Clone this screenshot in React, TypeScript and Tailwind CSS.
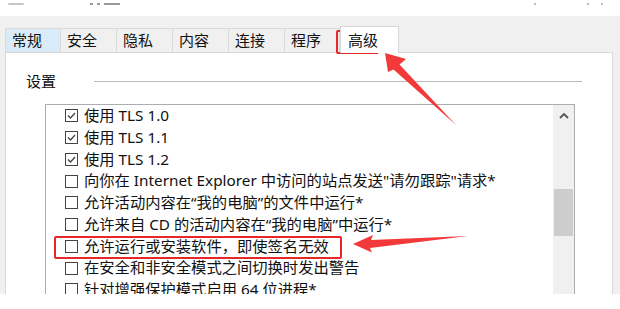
import React from 'react';

interface Option {
  label: string;
  checked: boolean;
}

const tabs = ['常规', '安全', '隐私', '内容', '连接', '程序'];

const options: Option[] = [
  { label: '使用 TLS 1.0', checked: true },
  { label: '使用 TLS 1.1', checked: true },
  { label: '使用 TLS 1.2', checked: true },
  { label: '向你在 Internet Explorer 中访问的站点发送"请勿跟踪"请求*', checked: false },
  { label: '允许活动内容在“我的电脑”的文件中运行*', checked: false },
  { label: '允许来自 CD 的活动内容在“我的电脑”中运行*', checked: false },
  { label: '允许运行或安装软件，即使签名无效', checked: false },
  { label: '在安全和非安全模式之间切换时发出警告', checked: false },
  { label: '针对增强保护模式启用 64 位进程*', checked: false },
];

function CheckBox({ checked }: { checked: boolean }) {
  return (
    <div className="w-[13px] h-[13px] shrink-0 border border-[#444] bg-white flex items-center justify-center">
      {checked && (
        <svg width="11" height="11" viewBox="0 0 11 11">
          <path d="M2 5.5 L4.5 8 L9 3" fill="none" stroke="#444" strokeWidth="1.3" />
        </svg>
      )}
    </div>
  );
}

function Arrows() {
  return (
    <svg className="absolute left-0 top-0 pointer-events-none" width="620" height="309" viewBox="0 0 620 309">
      {/* arrow to the 高级 tab */}
      <polygon
        points="385,53 406,59 399.5,64.5 456,125 393.5,69.5 388,72"
        fill="#f23a3a"
      />
      {/* arrow to the highlighted option */}
      <polygon
        points="353,244 373,235 371,240 468,236 370,248 372,252.5"
        fill="#f23a3a"
      />
    </svg>
  );
}

export default function App() {
  return (
    <div className="relative w-[620px] h-[309px] bg-white overflow-hidden font-['Noto_Sans','Noto_Sans_CJK_SC',sans-serif] text-[15px] text-[#111]">
      {/* leftover title bar */}
      <div className="h-[16px] flex items-start pt-[3px]">
        <div className="ml-[8px] w-[16px] h-[2px] rounded bg-[#c8c8c8]" />
        <div className="ml-[66px] w-[3px] h-[2px] bg-[#999]" />
        <div className="ml-[4px] w-[3px] h-[2px] bg-[#999]" />
        <div className="ml-[4px] w-[16px] h-[2px] bg-[#999]" />
        <div className="ml-[414px] w-[2px] h-[2px] bg-[#bbb]" />
        <div className="ml-[51px] w-[2px] h-[2px] bg-[#bbb]" />
        <div className="ml-[12px] w-[2px] h-[2px] bg-[#bbb]" />
      </div>

      <div className="h-[278px] bg-[#f0f0f0] pt-[10px] pl-[5px]">
        {/* tab strip */}
        <div className="flex items-end h-[26px]">
          {tabs.map((t, i) => (
            <div
              key={t}
              className={
                i === 0
                  ? 'h-[24px] w-[56px] pl-[6px] flex items-center leading-none bg-[#d9eaf8] border border-b-0 border-[#dadada]'
                  : i === tabs.length - 1
                  ? 'h-[24px] w-[55px] pl-[6px] flex items-center leading-none border-t border-r border-[#dadada]'
                  : 'h-[24px] w-[56px] pl-[6px] flex items-center leading-none border-t border-r border-[#dadada]'
              }
            >
              {t}
            </div>
          ))}
          <div className="relative z-10 -mb-px h-[27px] w-[59px] pl-[7px] flex items-center leading-none bg-white border border-b-0 border-[#d9d9d9]">
            高级
          </div>
        </div>

        {/* tab page */}
        <div className="w-[608px] h-[242px] bg-white border border-b-0 border-[#d9d9d9] overflow-hidden">
          <div className="mt-[19px] h-[18px] flex items-center">
            <span className="ml-[20px] leading-none">设置</span>
            <div className="ml-[38px] w-[488px] border-t border-[#b9b9b9]" />
          </div>

          <div className="mt-[14px] ml-[39px] w-[530px] h-[220px] border border-b-0 border-[#abadb3] flex">
            <div className="flex-1 text-[15.3px]">
              {options.map((o) => (
                <div key={o.label} className="h-[21.75px] pl-[19px] flex items-center gap-[6px] whitespace-nowrap leading-none">
                  <CheckBox checked={o.checked} />
                  <span>{o.label}</span>
                </div>
              ))}
            </div>
            <div className="w-[21px] bg-[#f0f0f0] flex flex-col items-center">
              <div className="h-[21px] w-full flex items-center justify-center">
                <svg width="10" height="6" viewBox="0 0 10 6">
                  <path d="M1 5 L5 1 L9 5" fill="none" stroke="#555" strokeWidth="1.8" />
                </svg>
              </div>
              <div className="mt-[63px] w-[19px] h-[47px] bg-[#cdcdcd]" />
            </div>
          </div>
        </div>
      </div>

      {/* annotations */}
      <div className="absolute left-[336px] top-[30px] w-[43px] h-[24px] border-[2.5px] border-[#e62828] rounded-[2px]" />
      <div className="absolute left-[54px] top-[236px] w-[288px] h-[23px] border-[2.5px] border-[#e62828] rounded-[2px]" />
      <Arrows />
    </div>
  );
}
